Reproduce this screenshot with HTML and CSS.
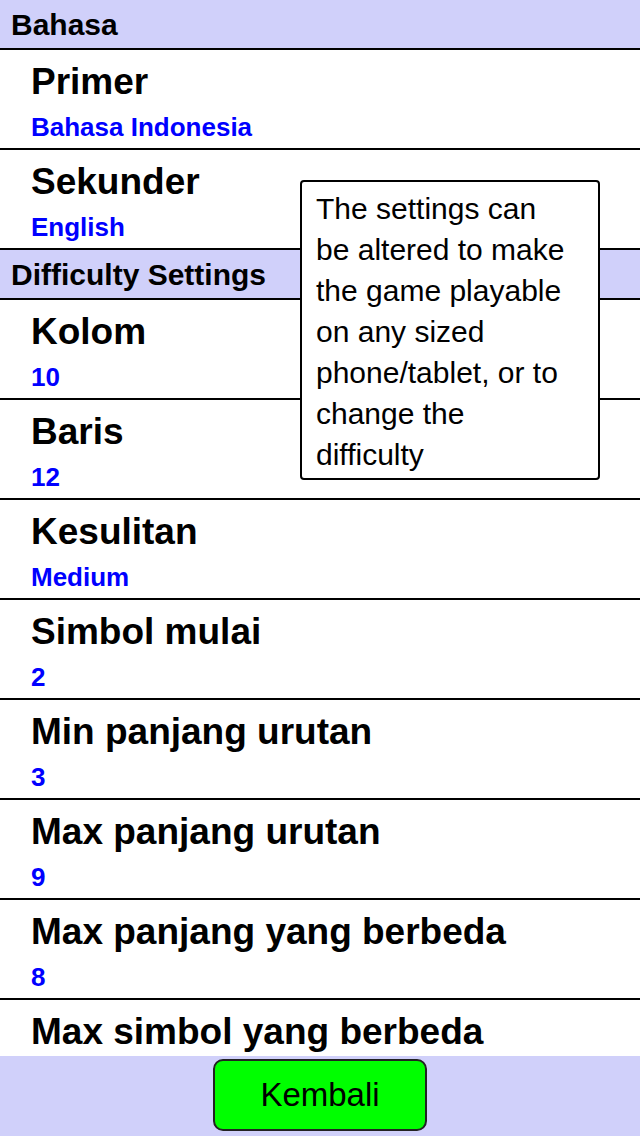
FILE: index.html
```html
<!DOCTYPE html>
<html lang="id">
<head>
    <meta charset="UTF-8">
    <meta name="viewport" content="width=device-width, initial-scale=1.0">
    <title>Settings</title>
    <link rel="stylesheet" href="styles.css">
</head>
<body>
    <div class="screen">
        <div class="settings-list">
            <div class="section-header">Bahasa</div>
            <div class="setting-row">
                <div class="setting-title">Primer</div>
                <div class="setting-value">Bahasa Indonesia</div>
            </div>
            <div class="setting-row">
                <div class="setting-title">Sekunder</div>
                <div class="setting-value">English</div>
            </div>

            <div class="section-header">Difficulty Settings</div>
            <div class="setting-row">
                <div class="setting-title">Kolom</div>
                <div class="setting-value">10</div>
            </div>
            <div class="setting-row">
                <div class="setting-title">Baris</div>
                <div class="setting-value">12</div>
            </div>
            <div class="setting-row">
                <div class="setting-title">Kesulitan</div>
                <div class="setting-value">Medium</div>
            </div>
            <div class="setting-row">
                <div class="setting-title">Simbol mulai</div>
                <div class="setting-value">2</div>
            </div>
            <div class="setting-row">
                <div class="setting-title">Min panjang urutan</div>
                <div class="setting-value">3</div>
            </div>
            <div class="setting-row">
                <div class="setting-title">Max panjang urutan</div>
                <div class="setting-value">9</div>
            </div>
            <div class="setting-row">
                <div class="setting-title">Max panjang yang berbeda</div>
                <div class="setting-value">8</div>
            </div>
            <div class="setting-row">
                <div class="setting-title">Max simbol yang berbeda</div>
            </div>
        </div>

        <div class="bottom-bar">
            <button class="back-button">Kembali</button>
        </div>

        <div class="tooltip">
            The settings can be altered to make the game playable on any sized phone/tablet, or to change the difficulty
        </div>
    </div>
</body>
</html>
```

FILE: styles.css
```css
:root {
    --header-bg: #d0d0fa;
    --value-blue: #0000ff;
    --line: #000000;
    --button-green: #00ff00;
}

* {
    margin: 0;
    padding: 0;
    box-sizing: border-box;
}

body {
    font-family: "Liberation Sans", Arial, sans-serif;
    background-color: #ffffff;
    color: #000000;
}

.screen {
    position: relative;
    width: 640px;
    height: 1136px;
    display: flex;
    flex-direction: column;
    overflow: hidden;
}

.settings-list {
    flex: 1;
    overflow: hidden;
}

.section-header {
    height: 50px;
    line-height: 49px;
    padding-left: 11px;
    background-color: var(--header-bg);
    border-bottom: 2px solid var(--line);
    font-size: 30px;
    font-weight: bold;
}

.setting-row {
    height: 100px;
    padding: 12px 0 0 31px;
    border-bottom: 2px solid var(--line);
}

.setting-title {
    font-size: 37px;
    font-weight: bold;
    line-height: 40px;
    white-space: nowrap;
}

.setting-value {
    margin-top: 10px;
    font-size: 26px;
    font-weight: bold;
    line-height: 30px;
    color: var(--value-blue);
}

.bottom-bar {
    height: 80px;
    flex-shrink: 0;
    background-color: var(--header-bg);
    display: flex;
    justify-content: center;
    padding-top: 3px;
}

.back-button {
    width: 214px;
    height: 72px;
    background-color: var(--button-green);
    border: 2px solid #222222;
    border-radius: 10px;
    font-family: "Liberation Sans", Arial, sans-serif;
    font-size: 33px;
    color: #000000;
}

.tooltip {
    position: absolute;
    left: 300px;
    top: 180px;
    width: 300px;
    height: 300px;
    padding: 6px 24px 0 14px;
    background-color: #ffffff;
    border: 2px solid var(--line);
    border-radius: 4px;
    font-size: 30px;
    line-height: 41px;
}
```
